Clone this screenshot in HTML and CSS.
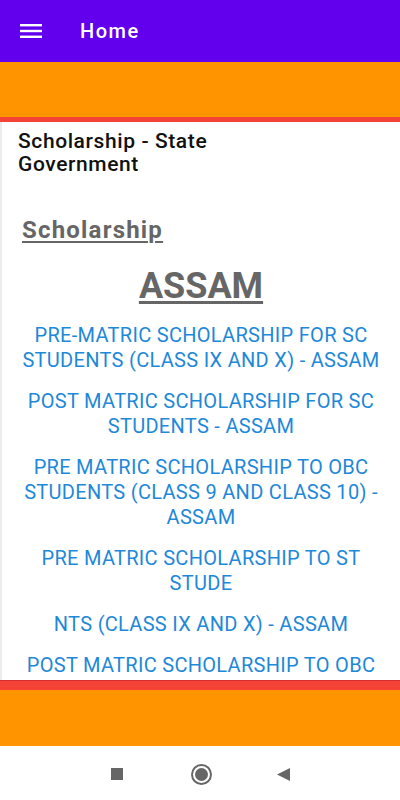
FILE: index.html
```html
<!DOCTYPE html>
<html lang="en">
<head>
<meta charset="utf-8">
<title>Home</title>
<link rel="stylesheet" href="styles.css">
</head>
<body>
<div class="screen">
  <header class="appbar">
    <svg class="menu" width="22" height="16" viewBox="0 0 22 16"><rect x="0" y="1" width="22" height="2.4" fill="#fff"/><rect x="0" y="6.8" width="22" height="2.4" fill="#fff"/><rect x="0" y="12.6" width="22" height="2.4" fill="#fff"/></svg>
    <h1 class="appbar-title">Home</h1>
  </header>
  <div class="banner"></div>
  <div class="stripe stripe-top"></div>
  <main class="content">
    <h2 class="page-title">Scholarship - State Government</h2>
    <div class="web">
      <h3 class="section">Scholarship</h3>
      <h4 class="state">ASSAM</h4>
      <ul class="links">
        <li>PRE-MATRIC SCHOLARSHIP FOR SC STUDENTS (CLASS IX AND X) - ASSAM</li>
        <li>POST MATRIC SCHOLARSHIP FOR SC STUDENTS - ASSAM</li>
        <li>PRE MATRIC SCHOLARSHIP TO OBC STUDENTS (CLASS 9 AND CLASS 10) - ASSAM</li>
        <li>PRE MATRIC SCHOLARSHIP TO ST STUDE</li>
        <li>NTS (CLASS IX AND X) - ASSAM</li>
        <li>POST MATRIC SCHOLARSHIP TO OBC STUDENTS - ASSAM</li>
      </ul>
    </div>
  </main>
  <div class="stripe stripe-bottom"></div>
  <div class="banner banner-bottom"></div>
  <nav class="navbar">
    <span class="nav-square"></span>
    <span class="nav-home"></span>
    <svg class="nav-back" width="13" height="13" viewBox="0 0 13 13"><polygon points="13,0 13,13 0,6.5" fill="#666"/></svg>
  </nav>
</div>
</body>
</html>
```
FILE: styles.css
```css
* { box-sizing: border-box; }
html, body { margin: 0; padding: 0; }
body { font-family: Roboto, "Noto Sans", sans-serif; background: #fff; }
.screen { width: 400px; height: 800px; display: flex; flex-direction: column; overflow: hidden; }

.appbar { height: 62px; background: #6200ee; display: flex; align-items: center; padding-left: 20px; flex: none; }
.menu { display: block; }
.appbar-title { margin: 0 0 0 38px; color: #fff; font-size: 20px; font-weight: 500; letter-spacing: 1.5px; }

.banner { height: 55px; background: #ff9300; flex: none; }
.banner-bottom { height: 56px; }
.stripe { background: #f44336; flex: none; }
.stripe-top { height: 5px; }
.stripe-bottom { height: 10px; border-top: 1px solid #d32f2f; }

.content { flex: 1; overflow: hidden; border-left: 2px solid #ececec; padding: 8px 0 0 16px; }
.page-title { margin: 0; width: 240px; font-size: 21px; font-weight: 500; line-height: 22.7px; letter-spacing: 0.6px; color: #111; }

.web { padding: 40px 20px 0 4px; }
.section { margin: 0; font-size: 24px; font-weight: 700; color: #666; letter-spacing: 1.2px; text-decoration: underline; text-decoration-thickness: 2px; text-underline-offset: 3px; line-height: 30px; }
.state { margin: 20px 0 0; text-align: center; font-size: 36px; font-weight: 700; color: #666; text-decoration: underline; text-decoration-thickness: 3px; text-underline-offset: 3px; line-height: 42px; }

.links { list-style: none; margin: 16px -3px 0 -3px; padding: 0; }
.links li { text-align: center; color: #1e88d9; font-size: 20px; letter-spacing: 0.3px; line-height: 25px; margin-bottom: 16px; }

.navbar { height: 54px; padding-top: 2px; background: #fff; display: flex; align-items: center; justify-content: center; flex: none; }
.nav-square { width: 12px; height: 12px; background: #666; display: block; margin-right: 68px; }
.nav-home { width: 21px; height: 21px; border-radius: 50%; border: 2px solid #666; display: flex; align-items: center; justify-content: center; margin-right: 65px; }
.nav-home::after { content: ""; width: 13px; height: 13px; border-radius: 50%; background: #666; display: block; }
.nav-back { display: block; }
```
